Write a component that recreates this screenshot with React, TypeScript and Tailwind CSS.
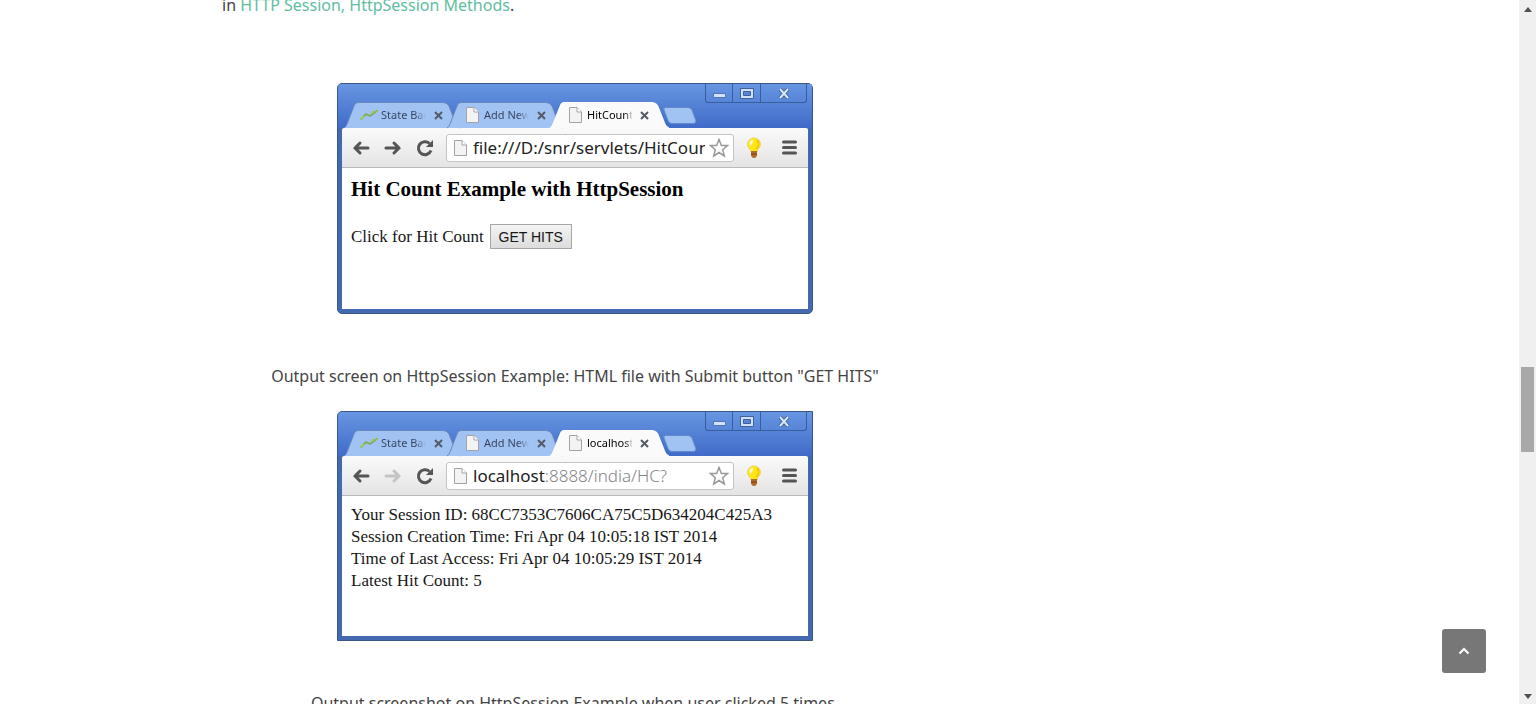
import type { ReactNode } from "react";

function PageIcon() {
  return (
    <svg width="13" height="16" viewBox="0 0 13 16" className="shrink-0">
      <path d="M.5.5h7.5l4.5 4.5v10.5H.5z" fill="#f3f3f3" stroke="#a3a3a3" />
      <path d="M8 .5V5h4.500" fill="#fff" stroke="#a3a3a3" />
    </svg>
  );
}

function ChartIcon() {
  return (
    <svg width="19" height="12" viewBox="0 0 19 12" className="shrink-0">
      <path d="M1 10.500 6 5l4 2 6-4.500" fill="none" stroke="#7cab52" strokeWidth="1.800" />
      <path d="M1 10 4 7M12 4l2-2" fill="none" stroke="#a5c94a" strokeWidth="2" />
      <circle cx="17" cy="1.800" r="1.200" fill="#94bd55" />
    </svg>
  );
}

function TabClose() {
  return (
    <button aria-label="Close tab" className="flex h-4 w-4 shrink-0 items-center justify-center">
      <svg width="9" height="9" viewBox="0 0 9 9">
        <path d="m1 1 7 7M8 1 1 8" stroke="#545b66" strokeWidth="2" />
      </svg>
    </button>
  );
}

function Tab({ title, icon, active = false }: { title: string; icon: ReactNode; active?: boolean }) {
  return (
    <div className={active ? "relative z-20 -ml-3 h-[26px] w-[118px]" : "relative -ml-3 h-[26px] w-[115px]"}>
      <svg className="absolute inset-0 h-full w-full overflow-visible" viewBox="0 0 115 26" preserveAspectRatio="none">
        <path
          d="M-1 26Q1 25 2 22L9 4Q10 .5 13 .5H98Q102 .5 104 4L111 22Q112 25 115 26"
          fill={active ? "#fafafa" : "#a0c3f4"}
          stroke={active ? "#ffffff" : "#6688bd"}
          strokeWidth="1"
        />
      </svg>
      <div className="relative flex h-full items-center pl-3.5">
        <span className="flex w-[21px] justify-center">{icon}</span>
        <span
          className={
            active
              ? "ml-px w-[45px] overflow-hidden bg-linear-to-r from-black from-80% to-neutral-300 bg-clip-text text-[11px] whitespace-nowrap text-transparent"
              : "ml-px w-[45px] overflow-hidden bg-linear-to-r from-[#34415a] from-75% to-[#a0c3f4] bg-clip-text text-[11px] whitespace-nowrap text-transparent"
          }
        >
          {title}
        </span>
        <span className="ml-1">
          <TabClose />
        </span>
      </div>
    </div>
  );
}

function Arrow({ forward = false, dim = false }: { forward?: boolean; dim?: boolean }) {
  return (
    <button aria-label={forward ? "Forward" : "Back"} disabled={dim} className="flex h-6 w-8 items-center justify-center">
      <svg width="18" height="16" viewBox="0 0 18 16">
        <path
          d={forward ? "M2 8h13M10 3l5 5-5 5" : "M16 8H3M8 3 3 8l5 5"}
          fill="none"
          stroke={dim ? "#c4c4c4" : "#555"}
          strokeWidth="3"
          strokeLinecap="round"
        />
      </svg>
    </button>
  );
}

type WindowProps = {
  title: string;
  host?: string;
  url: string;
  canForward?: boolean;
  square?: boolean;
  children: ReactNode;
};

function BrowserWindow({ title, host, url, canForward = false, square = false, children }: WindowProps) {
  return (
    <section
      className={
        square
          ? "flex h-[230px] w-[476px] flex-col rounded-tl-[5px] border border-[#3c5783] bg-[#4369b0] font-['Noto_Sans',sans-serif]"
          : "flex h-[231px] w-[476px] flex-col rounded-[5px] border border-[#3c5783] bg-[#4369b0] font-['Noto_Sans',sans-serif]"
      }
    >
      <header className="flex h-11 shrink-0 items-end justify-between rounded-tl-[4px] bg-linear-to-b from-[#6796e2] to-[#406bc8] pr-[5px] pl-[19px]">
        <div className="flex items-end">
          <Tab title="State Bank" icon={<ChartIcon />} />
          <Tab title="Add New" icon={<PageIcon />} />
          <Tab title={title} icon={<PageIcon />} active />
          <button aria-label="New tab" className="mb-1 -ml-1.5">
            <svg width="34" height="17" viewBox="0 0 34 17">
              <path d="M1 3Q0 .5 3 .5H25Q28 .5 29 3l4 11q0 2.500-3 2.500H9q-3 0-4-3z" fill="#a0c3f4" stroke="#638bc9" />
            </svg>
          </button>
        </div>
        <div className="flex h-[19px] self-start rounded-b-[3px] border border-t-0 border-[#395d9e]">
          <button aria-label="Minimize" className="flex w-[27px] items-center justify-center border-r border-[#395d9e]">
            <svg width="13" height="5" viewBox="0 0 13 5" className="mt-1">
              <path d="M.5.5h12v4H.5z" fill="#d3e1f8" stroke="#5276b0" />
            </svg>
          </button>
          <button aria-label="Maximize" className="flex w-7 items-center justify-center border-r border-[#395d9e]">
            <svg width="14" height="11" viewBox="0 0 14 11">
              <path d="M.5.5h13v10H.5z" fill="#d0dff8" stroke="#416199" />
              <path d="M3.500 3.500h7v4h-7z" fill="#5684d4" stroke="#416199" />
            </svg>
          </button>
          <button aria-label="Close" className="flex w-[45px] items-center justify-center">
            <svg width="12" height="11" viewBox="0 0 12 11">
              <path d="m2 1 8 9M10 1 2 10" stroke="#416199" strokeWidth="4" />
              <path d="m2 1 8 9M10 1 2 10" stroke="#dce7fa" strokeWidth="2" />
            </svg>
          </button>
        </div>
      </header>
      <div className="mx-1 flex h-10 shrink-0 items-center rounded-t-[2px] border-b border-[#b9b9b9] bg-linear-to-b from-[#fafafa] to-[#e4e4e4] pl-[3px]">
        <Arrow />
        <Arrow forward dim={!canForward} />
        <button aria-label="Reload" className="flex h-6 w-8 items-center justify-center">
          <svg width="18" height="18" viewBox="0 0 18 18">
            <path d="M15 11.500A6.500 6.500 0 1 1 13.500 4.500" fill="none" stroke="#555" strokeWidth="3" />
            <path d="M17 1v7h-7z" fill="#555" />
          </svg>
        </button>
        <div className="ml-[5px] flex h-7 w-[288px] items-center rounded-[3px] border border-[#c4c4c4] bg-white pr-1 pl-[7px]">
          <PageIcon />
          {host && <span className="ml-1.5 text-[17px] text-[#222]">{host}</span>}
          <input
            aria-label="Address"
            defaultValue={url}
            className={
              host
                ? "w-0 min-w-0 flex-1 bg-transparent text-[17px] font-light text-[#858585] outline-none"
                : "ml-1.5 w-0 min-w-0 flex-1 bg-transparent text-[17px] text-[#222] outline-none"
            }
          />
          <button aria-label="Bookmark" className="ml-1 shrink-0">
            <svg width="20" height="20" viewBox="0 0 20 20">
              <path d="m10 1.500 2.400 6h6.100l-4.800 4.200 1.600 6.300-5.300-3.500L4.700 18l1.600-6.300-4.800-4.200h6.100z" fill="#fff" stroke="#999" strokeWidth="1.500" />
            </svg>
          </button>
        </div>
        <button aria-label="Tips" className="ml-3">
          <svg width="16" height="22" viewBox="0 0 16 22">
            <path d="M8 1a6.500 6.500 0 0 0-6.500 6.500C1.500 11 5 12 5 15h6c0-3 3.500-4 3.500-7.500A6.500 6.500 0 0 0 8 1z" fill="#ffe817" stroke="#efd067" />
            <path d="M6 3a4 4 0 0 0-2 5c1 2 3-2 3-5z" fill="#fffcd0" />
            <path d="M11 3c3 3 1 7-1 9" stroke="#ffc400" strokeWidth="2" fill="none" />
            <path d="M5 14h6v5l-2 2H7l-2-2z" fill="#b56a22" />
            <path d="M5 17h6" stroke="#7a431b" />
          </svg>
        </button>
        <button aria-label="Menu" className="ml-5">
          <svg width="15" height="15" viewBox="0 0 15 15">
            <path d="M1.500 2h12M1.500 7.500h12M1.500 13h12" stroke="#555" strokeWidth="3" strokeLinecap="round" />
          </svg>
        </button>
      </div>
      <div className="mx-1 mb-1 flex-1 bg-white px-[9px] font-['Liberation_Serif',serif] text-[17px] leading-[22px] text-[#171717]">
        {children}
      </div>
    </section>
  );
}

function Scrollbar() {
  return (
    <aside aria-hidden="true" className="flex w-[17px] shrink-0 flex-col items-center justify-between bg-[#f0f0f0] pt-[7px] pb-[5px]">
      <svg width="8" height="5" viewBox="0 0 8 5">
        <path d="m4 0 4 5H0z" fill="#505050" />
      </svg>
      <div className="mt-[112px] h-[85px] w-[13px] bg-[#a8a8a8]" />
      <svg width="8" height="5" viewBox="0 0 8 5">
        <path d="M0 0h8L4 5z" fill="#505050" />
      </svg>
    </aside>
  );
}

export default function App() {
  return (
    <div className="flex h-screen overflow-hidden bg-white">
      <main className="min-w-0 flex-1 overflow-hidden pl-[222px] font-['Noto_Sans',sans-serif] text-base leading-7 text-[#444]">
        <article className="-mt-[9px] max-w-[706px]">
          <p>
            in{" "}
            <a href="#session" className="text-[#5fbea0]">
              HTTP Session, HttpSession Methods
            </a>
            .
          </p>
          <div className="mt-16 flex flex-col items-center">
            <BrowserWindow title="HitCount" url="file:///D:/snr/servlets/HitCount.html" canForward>
              <h3 className="pt-[10px] text-[21px] leading-[22px] font-bold text-black">Hit Count Example with HttpSession</h3>
              <form className="mt-6 flex items-center gap-1.5" onSubmit={(e) => e.preventDefault()}>
                <span>Click for Hit Count</span>
                <button
                  type="submit"
                  className="h-[25px] w-[82px] border border-[#a6a6a6] bg-linear-to-b from-[#f4f4f4] to-[#dcdcdc] font-['Liberation_Sans',sans-serif] text-sm leading-5"
                >
                  GET HITS
                </button>
              </form>
            </BrowserWindow>
            <p className="mt-12 whitespace-nowrap">Output screen on HttpSession Example: HTML file with Submit button "GET HITS"</p>
            <div className="mt-[21px]">
              <BrowserWindow title="localhost" host="localhost" url=":8888/india/HC?" square>
                <div className="pt-2 whitespace-nowrap">
                  <p>Your Session ID: 68CC7353C7606CA75C5D634204C425A3</p>
                  <p>Session Creation Time: Fri Apr 04 10:05:18 IST 2014</p>
                  <p>Time of Last Access: Fri Apr 04 10:05:29 IST 2014</p>
                  <p>Latest Hit Count: 5</p>
                </div>
              </BrowserWindow>
            </div>
            <p className="mt-12">Output screenshot on HttpSession Example when user clicked 5 times.</p>
          </div>
        </article>
      </main>
      <button
        aria-label="Back to top"
        className="fixed right-[50px] bottom-[31px] flex h-11 w-11 items-center justify-center rounded-[3px] bg-[#777]"
      >
        <svg width="12" height="8" viewBox="0 0 12 8">
          <path d="m1.500 6.500 4.500-4.500 4.500 4.500" fill="none" stroke="#fff" strokeWidth="2" />
        </svg>
      </button>
      <Scrollbar />
    </div>
  );
}
